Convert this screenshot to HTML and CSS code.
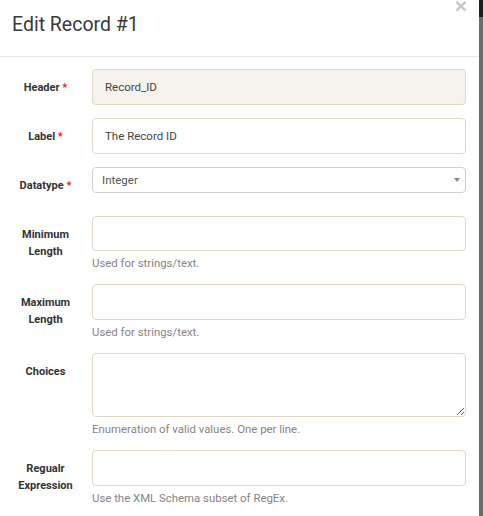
FILE: index.html
```html
<!DOCTYPE html>
<html lang="en">
<head>
<meta charset="utf-8">
<title>Edit Record #1</title>
<link rel="stylesheet" href="styles.css">
</head>
<body>
<div class="modal">
  <div class="modal-header">
    <h4 class="modal-title">Edit Record #1</h4>
    <button class="close" type="button">&times;</button>
  </div>
  <form class="modal-body">
    <div class="row">
      <label class="lbl">Header <span class="req">*</span></label>
      <div class="ctl"><input class="field readonly" type="text" value="Record_ID" readonly></div>
    </div>
    <div class="row">
      <label class="lbl">Label <span class="req">*</span></label>
      <div class="ctl"><input class="field" type="text" value="The Record ID"></div>
    </div>
    <div class="row">
      <label class="lbl">Datatype <span class="req">*</span></label>
      <div class="ctl select-row">
        <div class="select-wrap">
          <select class="select"><option>Integer</option></select>
          <span class="caret"></span>
        </div>
      </div>
    </div>
    <div class="row help-row">
      <label class="lbl">Minimum<br>Length</label>
      <div class="ctl"><input class="field short" type="text"><p class="help">Used for strings/text.</p></div>
    </div>
    <div class="row help-row">
      <label class="lbl">Maximum<br>Length</label>
      <div class="ctl"><input class="field" type="text"><p class="help">Used for strings/text.</p></div>
    </div>
    <div class="row help-row">
      <label class="lbl">Choices</label>
      <div class="ctl"><textarea class="field area"></textarea><p class="help">Enumeration of valid values. One per line.</p></div>
    </div>
    <div class="row help-row">
      <label class="lbl">Regualr<br>Expression</label>
      <div class="ctl"><input class="field" type="text"><p class="help">Use the XML Schema subset of RegEx.</p></div>
    </div>
  </form>
</div>
</body>
</html>
```
FILE: styles.css
```css
html, body {
  margin: 0;
  padding: 0;
}
body {
  width: 483px;
  height: 516px;
  overflow: hidden;
  background: linear-gradient(#1c1c1c 0, #1c1c1c 17px, #6b6b6b 17px);
  font-family: Roboto, "Liberation Sans", sans-serif;
}
.modal {
  width: 479px;
  height: 516px;
  background: #fff;
  box-sizing: border-box;
}
.modal-header {
  position: relative;
  height: 57px;
  box-sizing: border-box;
  padding: 11px 12px 0;
  border-bottom: 1px solid #e9e9e9;
}
.modal-title {
  margin: 0;
  font-size: 19.5px;
  font-weight: 400;
  line-height: 28px;
  color: #3a3a3a;
}
.close {
  position: absolute;
  top: -5px;
  right: 12px;
  padding: 0;
  border: 0;
  background: none;
  font-family: "Liberation Sans", sans-serif;
  font-size: 21px;
  font-weight: 700;
  line-height: 21px;
  color: #c8c8c8;
}
.modal-body {
  padding: 12px 13px 0 12px;
  margin: 0;
}
.row {
  display: grid;
  grid-template-columns: 67px 374px;
  column-gap: 13px;
  margin-bottom: 13px;
}
.help-row {
  margin-bottom: 12px;
}
.lbl {
  text-align: center;
  font-size: 11px;
  font-weight: 700;
  line-height: 17px;
  padding-top: 10px;
  color: #333;
}
.req {
  color: #e8161d;
}
.ctl {
  display: flex;
  flex-direction: column;
}
.field {
  display: block;
  box-sizing: border-box;
  width: 374px;
  height: 36px;
  margin: 0;
  padding: 0 12px;
  border: 1px solid #e1d8c8;
  border-radius: 4px;
  background: #fff;
  font-family: Roboto, "Liberation Sans", sans-serif;
  font-size: 11.5px;
  color: #444;
  outline: none;
}
.short {
  height: 35px;
}
.readonly {
  background: #f6f3ee;
}
.area {
  height: 64px;
  padding: 6px 12px;
  resize: vertical;
}
.select-row {
  height: 36px;
}
.select-wrap {
  position: relative;
  width: 374px;
  height: 26px;
}
.select {
  display: block;
  box-sizing: border-box;
  width: 374px;
  height: 26px;
  margin: 0;
  padding: 0 9px;
  border: 1px solid #cfcfcf;
  border-radius: 4px;
  background: #fff;
  font-family: Roboto, "Liberation Sans", sans-serif;
  font-size: 11.5px;
  color: #555;
  -webkit-appearance: none;
  appearance: none;
  outline: none;
}
.caret {
  position: absolute;
  right: 6px;
  top: 11px;
  width: 0;
  height: 0;
  border-left: 3px solid transparent;
  border-right: 3px solid transparent;
  border-top: 4px solid #888;
}
.help {
  margin: 4px 0 0;
  font-size: 11.4px;
  line-height: 17px;
  color: #858585;
}
```
